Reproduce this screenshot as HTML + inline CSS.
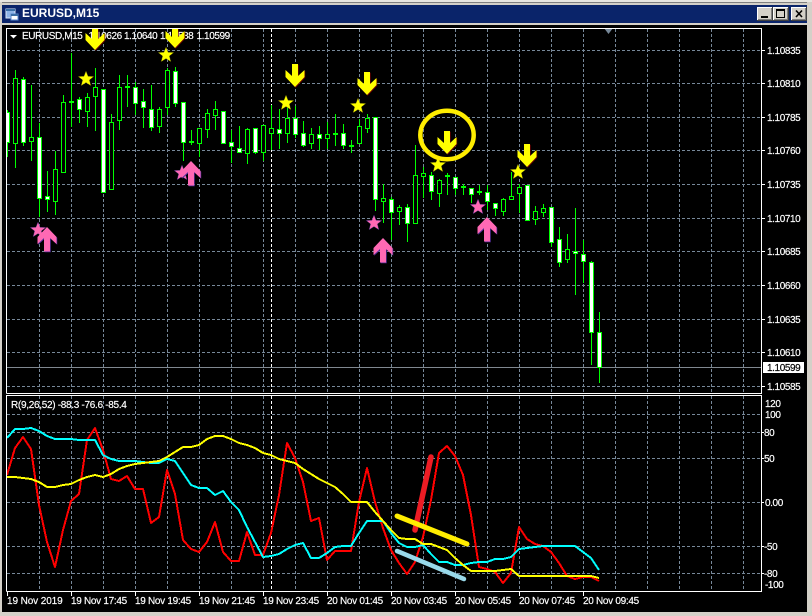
<!DOCTYPE html>
<html><head><meta charset="utf-8"><title>EURUSD,M15</title>
<style>
html,body{margin:0;padding:0;background:#D4D0C8;width:812px;height:616px;overflow:hidden}
svg{display:block}
text{font-family:"Liberation Sans",sans-serif;font-size:10px;fill:#fff;stroke:#fff;stroke-width:.18px;letter-spacing:-.3px}
.pr{letter-spacing:-.4px}
</style></head><body>
<svg width="812" height="616" viewBox="0 0 812 616" xmlns="http://www.w3.org/2000/svg">
<defs>
<path id="d" d="M-3-23H3V-11L9.500-17V-10L0 0-9.500-10V-17L-3-11Z"/>
<path id="u" d="M-3 24.500H3V11L9.500 17V10L0 0-9.500 10V17L-3 11Z"/>
<path id="s" d="M0-8 2.100-2.700 7.800-2.500 3.400 1 4.900 6.700 0 3.600-4.900 6.700-3.400 1-7.800-2.500-2.100-2.700Z"/>
<clipPath id="main"><rect x="7" y="28" width="754" height="365"/></clipPath>
</defs>

<!-- window frame -->
<rect width="812" height="616" fill="#D4D0C8"/>
<rect x="0" y="0" width="812" height="2" fill="#E8E6E0"/>
<rect x="2" y="2" width="805" height="610" fill="#808080"/>
<rect x="2" y="3" width="805" height="2" fill="#D4D0C8"/>
<rect x="2" y="5" width="805" height="18" fill="#0A246A"/>
<rect x="2" y="23" width="805" height="2" fill="#D4D0C8"/>
<rect x="2" y="25" width="805" height="587" fill="#000"/>

<!-- title -->
<rect x="6" y="9" width="9" height="9" fill="#8FB4E6" stroke="#DCE8F8"/>
<rect x="6" y="9" width="9" height="2" fill="#3A6EA5"/>
<rect x="11" y="14" width="7" height="6" fill="#fff" stroke="#5A8AD0"/>
<rect x="11" y="14" width="7" height="2" fill="#3A6EA5"/>
<text x="22" y="17" style="font-size:12px;font-weight:bold;letter-spacing:0;stroke:none">EURUSD,M15</text>

<!-- window buttons -->
<g shape-rendering="crispEdges">
<rect x="757" y="7" width="16" height="14" fill="#404040"/><rect x="757" y="7" width="15" height="13" fill="#fff"/><rect x="758" y="8" width="14" height="12" fill="#808080"/><rect x="758" y="8" width="13" height="11" fill="#D4D0C8"/>
<rect x="773" y="7" width="16" height="14" fill="#404040"/><rect x="773" y="7" width="15" height="13" fill="#fff"/><rect x="774" y="8" width="14" height="12" fill="#808080"/><rect x="774" y="8" width="13" height="11" fill="#D4D0C8"/>
<rect x="791" y="7" width="16" height="14" fill="#404040"/><rect x="791" y="7" width="15" height="13" fill="#fff"/><rect x="792" y="8" width="14" height="12" fill="#808080"/><rect x="792" y="8" width="13" height="11" fill="#D4D0C8"/>
<rect x="761" y="16" width="7" height="2" fill="#000"/>
<rect x="776" y="9" width="9" height="9" fill="#000"/><rect x="777" y="11" width="7" height="6" fill="#D4D0C8"/>
</g>
<path d="M796 10.500 802 17M802 10.500 796 17" stroke="#000" stroke-width="1.600" fill="none"/>

<!-- grid -->
<path shape-rendering="crispEdges" fill="none" stroke="#778899" stroke-dasharray="3 2" d="M7 50.500H761M7 83.500H761M7 117.500H761M7 150.500H761M7 184.500H761M7 218.500H761M7 251.500H761M7 285.500H761M7 319.500H761M7 352.500H761M7 386.500H761
M39.500 29V393M71.500 29V393M103.500 29V393M135.500 29V393M167.500 29V393M199.500 29V393M231.500 29V393M263.500 29V393M295.500 29V393M327.500 29V393M359.500 29V393M391.500 29V393M423.500 29V393M455.500 29V393M487.500 29V393M519.500 29V393M551.500 29V393M583.500 29V393M615.500 29V393M647.500 29V393M679.500 29V393M711.500 29V393M743.500 29V393
M7 414.500H761M7 432.500H761M7 458.500H761M7 502.500H761M7 546.500H761M7 573.500H761
M39.500 396V591M71.500 396V591M103.500 396V591M135.500 396V591M167.500 396V591M199.500 396V591M231.500 396V591M263.500 396V591M295.500 396V591M327.500 396V591M359.500 396V591M391.500 396V591M423.500 396V591M455.500 396V591M487.500 396V591M519.500 396V591M551.500 396V591M583.500 396V591M615.500 396V591M647.500 396V591M679.500 396V591M711.500 396V591M743.500 396V591"/>
<path shape-rendering="crispEdges" fill="none" stroke="#fff" stroke-dasharray="3 2" d="M271.500 29V393M271.500 396V591"/>
<path d="M604 28H613L608.500 34Z" fill="#778899"/>

<!-- price line -->
<path shape-rendering="crispEdges" stroke="#808890" d="M7 367.500H761"/>

<g clip-path="url(#main)">
<!-- wicks -->
<path shape-rendering="crispEdges" fill="none" stroke="#00FF00" d="M7.500 110V157M15.500 70V168M23.500 77V146M31.500 85V161M39.500 123V217M47.500 171V212M55.500 151V215M63.500 95V172M71.500 53V127M79.500 97V123M87.500 93V127M95.500 68V131M103.500 89V193M111.500 114V189M119.500 75V130M127.500 75V107M135.500 82V115M143.500 89V128M151.500 85V131M159.500 107V133M167.500 68V115M175.500 67V107M183.500 102V161M191.500 130V145M199.500 128V157M207.500 109V138M215.500 101V130M223.500 111V143M231.500 130V163M239.500 126V152M247.500 128V164M255.500 128V154M263.500 125V161M271.500 105V150M279.500 109V149M287.500 105V143M295.500 106V138M303.500 121V147M311.500 128V149M319.500 126V150M327.500 122V149M335.500 114V146M343.500 124V149M351.500 140V153M359.500 119V143M367.500 114V133M375.500 117V211M383.500 184V223M391.500 197V240M399.500 205V225M407.500 204V242M415.500 145V223M423.500 167V198M431.500 172V200M439.500 179V207M447.500 173V195M455.500 177V195M463.500 184V195M471.500 188V203M479.500 185V195M487.500 185V210M495.500 203V216M503.500 198V216M511.500 172V199M519.500 184V213M527.500 185V220M535.500 206V225M543.500 204V217M551.500 207V247M559.500 227V267M567.500 234V263M575.500 208V295M583.500 240V283M591.500 261V365M599.500 312V383"/>
<!-- hollow (bull) bodies -->
<path shape-rendering="crispEdges" fill="#000" stroke="#00FF00" d="M13.500 78.500h4v65h-4zM29.500 137.500h4v4h-4zM53.500 169.500h4v32h-4zM61.500 102.500h4v70h-4zM85.500 97.500h4v14h-4zM93.500 87.500h4v9h-4zM109.500 122.500h4v67h-4zM117.500 87.500h4v33h-4zM157.500 109.500h4v17h-4zM165.500 70.500h4v37h-4zM197.500 128.500h4v15h-4zM205.500 113.500h4v16h-4zM213.500 109.500h4v6h-4zM245.500 129.500h4v24h-4zM261.500 125.500h4v27h-4zM269.500 128.500h4v5h-4zM285.500 118.500h4v15h-4zM309.500 134.500h4v9h-4zM325.500 134.500h4v4h-4zM357.500 126.500h4v17h-4zM365.500 118.500h4v10h-4zM381.500 198.500h4v3h-4zM397.500 207.500h4v4h-4zM413.500 175.500h4v48h-4zM421.500 173.500h4v3h-4zM437.500 180.500h4v13h-4zM501.500 199.500h4v12h-4zM509.500 196.500h4v3h-4zM517.500 187.500h4v6h-4zM533.500 211.500h4v8h-4zM541.500 208.500h4v4h-4zM565.500 249.500h4v10h-4z"/>
<!-- white (bear) bodies -->
<path shape-rendering="crispEdges" fill="#fff" stroke="#00FF00" d="M5.500 112.500h4v30h-4zM21.500 79.500h4v63h-4zM37.500 137.500h4v61h-4zM45.500 196.500h4v3h-4zM77.500 99.500h4v10h-4zM101.500 89.500h4v103h-4zM133.500 87.500h4v16h-4zM141.500 101.500h4v6h-4zM149.500 109.500h4v18h-4zM173.500 71.500h4v32h-4zM181.500 102.500h4v40h-4zM221.500 111.500h4v32h-4zM229.500 142.500h4v4h-4zM237.500 148.500h4v4h-4zM253.500 128.500h4v24h-4zM277.500 129.500h4v4h-4zM293.500 118.500h4v16h-4zM301.500 133.500h4v12h-4zM317.500 134.500h4v4h-4zM341.500 133.500h4v12h-4zM373.500 117.500h4v82h-4zM389.500 199.500h4v13h-4zM405.500 207.500h4v16h-4zM429.500 175.500h4v16h-4zM453.500 177.500h4v11h-4zM469.500 188.500h4v6h-4zM485.500 192.500h4v9h-4zM493.500 203.500h4v5h-4zM525.500 185.500h4v35h-4zM549.500 207.500h4v35h-4zM557.500 239.500h4v23h-4zM573.500 251.500h4v2h-4zM581.500 254.500h4v7h-4zM589.500 262.500h4v70h-4zM597.500 332.500h4v35h-4z"/>
<!-- doji -->
<path shape-rendering="crispEdges" fill="none" stroke="#00FF00" stroke-width="2" d="M69 102h5M125 87h5M189 142h5M333 134h5M349 146h5M445 176h5M461 187h5M477 192h5"/>
</g>

<!-- info text -->
<path d="M10 35H17L13.500 38.500Z" fill="#fff"/>
<text class="pr" x="22" y="39">EURUSD,M15</text>
<text class="pr" x="88.500" y="39">1.10626</text>
<text class="pr" x="124" y="39">1.10640</text>
<text class="pr" x="160" y="39">1.10588</text>
<text class="pr" x="196.500" y="39">1.10599</text>

<!-- markers -->
<g clip-path="url(#main)">
<g fill="#6B0000" transform="translate(.7 .7)"><use href="#d" x="95" y="50"/><use href="#d" x="175" y="48"/><use href="#d" x="295" y="87"/><use href="#d" x="367" y="95"/><use href="#d" x="447" y="154"/><use href="#d" x="527" y="167"/></g>
<g fill="#FFFF00"><use href="#d" x="95" y="50"/><use href="#d" x="175" y="48"/><use href="#d" x="295" y="87"/><use href="#d" x="367" y="95"/><use href="#d" x="447" y="154"/><use href="#d" x="527" y="167"/></g>
<g fill="#FFFF00" stroke="#4A4A00" stroke-width=".4"><use href="#s" x="86" y="79"/><use href="#s" x="166" y="55"/><use href="#s" x="286" y="103"/><use href="#s" x="358" y="106"/><use href="#s" x="438" y="165"/><use href="#s" x="518" y="172"/></g>
<g fill="#FF69B4" stroke="#3A2A80" stroke-width=".4"><use href="#s" x="38" y="230"/><use href="#s" x="182" y="173"/><use href="#s" x="374" y="223"/><use href="#s" x="478" y="207"/></g>
<g fill="#5A30A0" transform="translate(.7 .7)"><use href="#u" x="47" y="227"/><use href="#u" x="191" y="161"/><use href="#u" x="383" y="238"/><use href="#u" x="487" y="217"/></g>
<g fill="#FF69B4"><use href="#u" x="47" y="227"/><use href="#u" x="191" y="161"/><use href="#u" x="383" y="238"/><use href="#u" x="487" y="217"/></g>
</g>
<ellipse cx="447" cy="135" rx="26.700" ry="24.200" fill="none" stroke="#FFED00" stroke-width="4.500"/>

<!-- indicator lines -->
<g fill="none" stroke-width="2" shape-rendering="crispEdges" stroke-linejoin="round">
<polyline stroke="#FF0000" points="7,475 15,448 23,437 31,449 39,505 47,542 55,567 63,530 71,501 79,494 87,440 95,428 103,450 111,479 119,481 127,476 135,489 143,489 151,523 159,517 167,470 175,494 183,540 191,549 199,552 207,542 215,522 223,552 231,561 239,561 247,532 255,555 263,555 271,533 279,495 287,443 295,458 303,482 311,521 319,518 327,560 335,551 343,551 351,551 359,502 367,468 375,502 383,528 391,550 399,563 407,574 415,562 423,537 431,500 439,453 447,446 455,456 463,475 471,515 479,567 487,569 495,572 503,583 511,573 519,527 527,539 535,544 543,546 551,552 559,563 567,576 575,579 583,577 591,577 599,581"/>
<polyline stroke="#00FFFF" points="7,438 15,429 23,429 31,428 39,431 47,436 55,439 63,439 71,439 79,440 87,440 95,440 103,455 111,459 119,461 127,461 135,461 143,462 151,463 159,463 167,459 175,461 183,473 191,485 199,488 207,488 215,495 223,491 231,502 239,510 247,527 255,542 263,557 271,556 279,554 287,549 295,545 303,543 311,558 319,558 327,553 335,547 343,546 351,546 359,533 367,521 375,521 383,521 391,533 399,543 407,547 415,547 423,545 431,554 439,562 447,562 455,565 463,565 471,563 479,562 487,562 495,559 503,559 511,557 519,549 527,548 535,547 543,546 551,546 559,546 567,546 575,546 583,552 591,558 599,570"/>
<polyline stroke="#FFFF00" points="7,477 15,477 23,478 31,479 39,482 47,487 55,487 63,485 71,484 79,480 87,477 95,475 103,477 111,474 119,469 127,466 135,464 143,463 151,462 159,461 167,457 175,452 183,447 191,447 199,445 207,439 215,436 223,436 231,439 239,443 247,445 255,448 263,453 271,455 279,459 287,461 295,463 303,469 311,474 319,479 327,483 335,487 343,494 351,502 359,502 367,502 375,512 383,521 391,530 399,538 407,539 415,539 423,544 431,544 439,547 447,550 455,558 463,565 471,571 479,571 487,571 495,571 503,570 511,569 519,576 527,576 535,576 543,576 551,576 559,576 567,576 575,576 583,576 591,576 599,578"/>
</g>

<!-- thick annotations -->
<g fill="none" stroke-linecap="round">
<path stroke="#ED1C24" stroke-width="5.500" d="M415 530 431 457"/>
<path stroke="#FFED00" stroke-width="5" d="M397 516 467 544"/>
<path stroke="#99D9EA" stroke-width="4.500" d="M397 551 464 579"/>
</g>

<!-- borders -->
<g shape-rendering="crispEdges" fill="none" stroke="#fff">
<path d="M6.500 393.500V28.500H761.500V393.500H6.500"/>
<path d="M6.500 591.500V395.500H761.500V591.500H6.500"/>
<path d="M761 50.500h4M761 83.500h4M761 117.500h4M761 150.500h4M761 184.500h4M761 218.500h4M761 251.500h4M761 285.500h4M761 319.500h4M761 352.500h4M761 386.500h4M761 432.500h3M761 458.500h3M761 502.500h3M761 546.500h3M761 573.500h3"/>
<path d="M7.500 592v4M71.500 592v4M135.500 592v4M199.500 592v4M263.500 592v4M327.500 592v4M391.500 592v4M455.500 592v4M519.500 592v4M583.500 592v4"/>
</g>

<!-- price labels -->
<text class="pr" x="767" y="54">1.10835</text>
<text class="pr" x="767" y="87">1.10810</text>
<text class="pr" x="767" y="121">1.10785</text>
<text class="pr" x="767" y="154">1.10760</text>
<text class="pr" x="767" y="188">1.10735</text>
<text class="pr" x="767" y="222">1.10710</text>
<text class="pr" x="767" y="255">1.10685</text>
<text class="pr" x="767" y="289">1.10660</text>
<text class="pr" x="767" y="323">1.10635</text>
<text class="pr" x="767" y="356">1.10610</text>
<text class="pr" x="767" y="390">1.10585</text>
<rect x="763" y="362" width="41" height="11" fill="#fff"/>
<text class="pr" x="767" y="371" style="fill:#000;stroke:#000">1.10599</text>

<!-- indicator labels -->
<text x="11" y="408">R(9,26,52) -88.3 -76.6 -85.4</text>
<text class="pr" x="765" y="407">120</text>
<text class="pr" x="765" y="418">100</text>
<text class="pr" x="764" y="436">80</text>
<text class="pr" x="764" y="462">50</text>
<text class="pr" x="765" y="506">0.00</text>
<text class="pr" x="764" y="550">-50</text>
<text class="pr" x="764" y="577">-80</text>
<text class="pr" x="765" y="588">-100</text>

<!-- time labels -->
<text x="7" y="604" style="letter-spacing:-.1px">19 Nov 2019</text>
<text x="71" y="604">19 Nov 17:45</text>
<text x="135" y="604">19 Nov 19:45</text>
<text x="199" y="604">19 Nov 21:45</text>
<text x="263" y="604">19 Nov 23:45</text>
<text x="327" y="604">20 Nov 01:45</text>
<text x="391" y="604">20 Nov 03:45</text>
<text x="455" y="604">20 Nov 05:45</text>
<text x="519" y="604">20 Nov 07:45</text>
<text x="583" y="604">20 Nov 09:45</text>
</svg>
</body></html>
